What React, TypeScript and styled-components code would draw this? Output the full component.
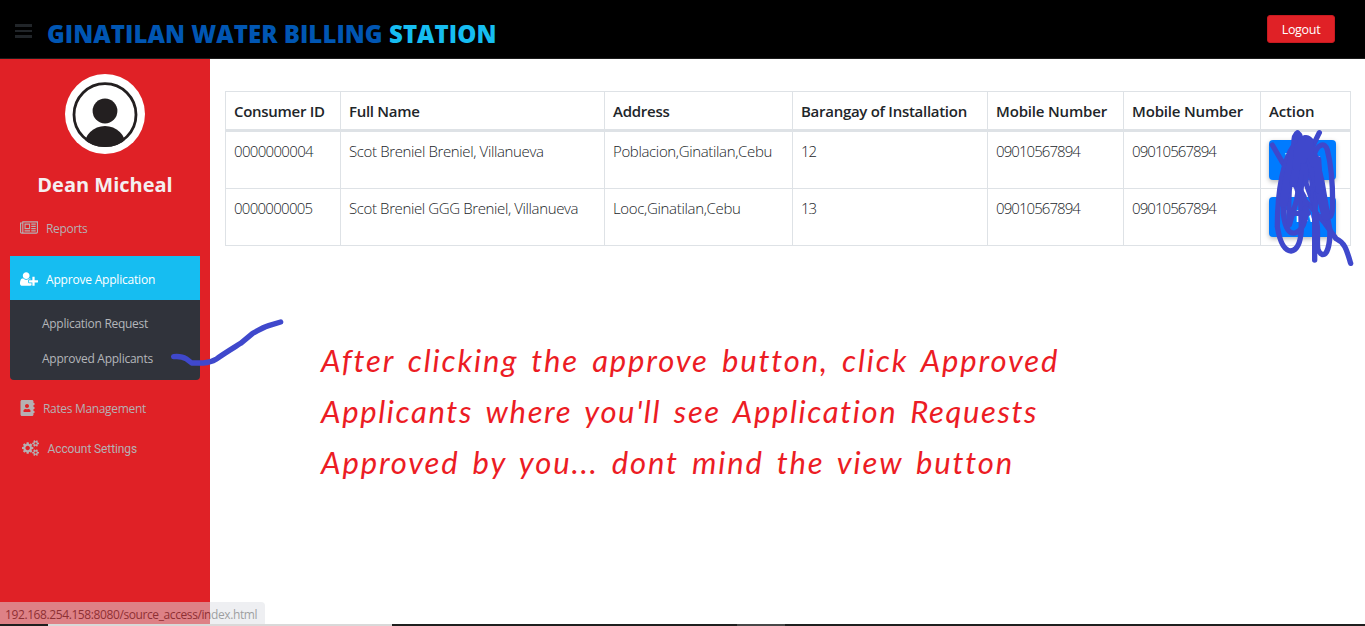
import React from 'react';
import styled, { createGlobalStyle } from 'styled-components';
import { FaAddressBook } from 'react-icons/fa';

const Global = createGlobalStyle`
  * { box-sizing: border-box; }
  body { margin: 0; background: #fff; overflow: hidden; font-family: "Open Sans", sans-serif; color: #212529; }
`;

const Page = styled.div`
  position: relative;
  display: flex;
  flex-direction: column;
  width: 1365px;
  height: 626px;
  overflow: hidden;
`;

const TopBar = styled.header`
  display: flex;
  align-items: center;
  flex: none;
  height: 59px;
  padding: 0 30px 0 15px;
  background: #000;
  border-bottom: 1px solid #1c1c1c;
`;

const MenuButton = styled.div`
  display: flex;
  flex-direction: column;
  gap: 3px;
  width: 17px;
  margin: 4px 16px 0 0;
`;

const MenuBar = styled.span`
  height: 2.6px;
  background: #212529;
`;

const Brand = styled.h1`
  flex: 1;
  margin: 10px 0 0 -1px;
  font-size: 24px;
  line-height: 32px;
  font-weight: 800;
  letter-spacing: 0.05px;
  color: #0056b3;
  white-space: nowrap;
`;

const BrandAccent = styled.span`
  color: #16bdf1;
`;

const LogoutButton = styled.button`
  width: 68px;
  height: 28px;
  padding: 2px 0 0;
  border: 1px solid #c81a20;
  border-radius: 3px;
  background: #e02126;
  color: #fff;
  font: 400 12.5px/24px "Open Sans", sans-serif;
  letter-spacing: -0.3px;
`;

const Body = styled.div`
  display: flex;
  flex: none;
  height: 565px;
`;

const Sidebar = styled.aside`
  display: flex;
  flex-direction: column;
  align-items: center;
  flex: none;
  width: 210px;
  padding: 15px 10px 0;
  background: #e02126;
`;

const Avatar = styled.svg`
  flex: none;
  width: 80px;
  height: 80px;
`;

const UserName = styled.div`
  margin: 19px 0 11px;
  font-size: 20px;
  line-height: 24px;
  font-weight: 700;
  color: #f4eff0;
  white-space: nowrap;
`;

const Nav = styled.nav`
  width: 100%;
`;

const NavItem = styled.div<{ $active?: boolean; $gap: number; $indent?: number }>`
  display: flex;
  align-items: center;
  gap: ${(p) => p.$gap}px;
  height: ${(p) => (p.$active ? 44 : 40)}px;
  margin-top: ${(p) => (p.$active ? 8 : 0)}px;
  padding: ${(p) => (p.$active ? 4 : 2)}px 0 0 ${(p) => p.$indent ?? 10}px;
  background: ${(p) => (p.$active ? '#16bdf1' : 'transparent')};
  color: ${(p) => (p.$active ? '#fff' : '#b5b0b3')};
`;

const NavIcon = styled.svg<{ $w?: number; $lift?: number }>`
  flex: none;
  width: ${(p) => p.$w ?? 18}px;
  height: 16px;
  margin-bottom: ${(p) => p.$lift ?? 0}px;
  fill: currentColor;
`;

const BookIcon = styled(FaAddressBook)`
  flex: none;
  width: 15px;
  height: 16px;
  margin-bottom: 3px;
`;

const NavLabel = styled.span<{ $track: number; $roboto?: boolean }>`
  font-family: ${(p) => (p.$roboto ? 'Roboto' : '"Open Sans"')}, sans-serif;
  font-size: 12px;
  line-height: 16px;
  letter-spacing: ${(p) => p.$track}px;
  white-space: nowrap;
`;

const SubMenu = styled.div`
  height: 80px;
  margin-bottom: 8px;
  padding: 6px 0 0 32px;
  border-radius: 0 0 4px 4px;
  background: #30333b;
  color: #b4b6ba;
`;

const SubItem = styled.div`
  display: flex;
  align-items: center;
  height: 35px;
`;

const Main = styled.main`
  flex: 1;
  padding: 32px 0 0 15px;
`;

const Table = styled.table`
  width: 1126px;
  table-layout: fixed;
  border-collapse: separate;
  border-spacing: 0;
  border-right: 1px solid #dee2e6;
`;

const Th = styled.th<{ $track: number }>`
  height: 41px;
  padding: 0 0 0 8px;
  border: solid #dee2e6;
  border-width: 1px 0 3px 1px;
  text-align: left;
  font-size: 15px;
  line-height: 22px;
  font-weight: 550;
  letter-spacing: ${(p) => p.$track}px;
  white-space: nowrap;
`;

const Td = styled.td<{ $track?: number }>`
  height: 57px;
  padding: 8px 0 0 8px;
  border: solid #dee2e6;
  border-width: 0 0 1px 1px;
  vertical-align: top;
  font-size: 15px;
  line-height: 23px;
  font-weight: 300;
  letter-spacing: ${(p) => p.$track ?? 0}px;
  white-space: nowrap;
`;

const ViewButton = styled.button`
  display: block;
  width: 67px;
  height: 40px;
  padding: 0;
  border: 0;
  border-radius: 4px;
  background: #007bff;
  box-shadow: 0 2px 5px rgba(0, 0, 0, 0.28);
  color: #fff;
  font: 500 16px/40px Roboto, sans-serif;
`;

const Note = styled.div`
  margin: 89px 0 0 96px;
  color: #ec1c24;
  font-family: Lato, sans-serif;
  font-size: 31px;
  font-style: italic;
  line-height: 51px;
  word-spacing: 4px;
  white-space: nowrap;
`;

const NoteLine = styled.div<{ $track: number }>`
  letter-spacing: ${(p) => p.$track}px;
`;

const Taskbar = styled.footer`
  display: flex;
  flex: none;
  height: 2px;
  background: #1f1f1f;
`;

const TaskSegment = styled.span<{ $w: number; $bg: string }>`
  width: ${(p) => p.$w}px;
  background: ${(p) => p.$bg};
`;

const LinkStatus = styled.div`
  position: absolute;
  left: 0;
  bottom: 2px;
  width: 265px;
  height: 22px;
  padding: 3px 0 0 5px;
  border-radius: 0 4px 0 0;
  background: #dee1e6;
  color: #3c4043;
  opacity: 0.5;
  font-size: 12px;
  line-height: 19px;
  letter-spacing: -0.4px;
  white-space: nowrap;
`;

const Ink = styled.svg<{ $x: number; $y: number }>`
  position: absolute;
  left: ${(p) => p.$x}px;
  top: ${(p) => p.$y}px;
  fill: none;
  stroke: #3f48cc;
  stroke-linecap: round;
  stroke-linejoin: round;
`;

const headers: [string, number, number][] = [
  ['Consumer ID', 115, -0.3],
  ['Full Name', 264, -0.3],
  ['Address', 188, -0.25],
  ['Barangay of Installation', 195, -0.28],
  ['Mobile Number', 136, -0.17],
  ['Mobile Number', 137, -0.17],
  ['Action', 90, -0.15],
];

const rows: [string, number][][] = [
  [['0000000004', -0.67], ['Scot Breniel Breniel, Villanueva', -0.37], ['Poblacion,Ginatilan,Cebu', -0.35], ['12', -1.1], ['09010567894', -0.93], ['09010567894', -0.93]],
  [['0000000005', -0.72], ['Scot Breniel GGG Breniel, Villanueva', -0.38], ['Looc,Ginatilan,Cebu', -0.33], ['13', -1.1], ['09010567894', -0.93], ['09010567894', -0.93]],
];

const newspaper =
  'M1024 512h-384v384h384v-384zm128 640v128h-640v-128h640zm0-768v640h-640v-640h640zm640 768v128h-512v-128h512zm0-256v128h-512v-128h512zm0-256v128h-512v-128h512zm0-256v128h-512v-128h512zm-1536 960v-960h-128v960q0 26 19 45t45 19 45-19 19-45zm1664 0v-1088h-1536v1088q0 33-11 64h1483q26 0 45-19t19-45zm128-1216v1216q0 80-56 136t-136 56h-1664q-80 0-136-56t-56-136v-1088h256v-128h1792z';
const userPlus =
  'M704 896q-159 0-271.5-112.5t-112.5-271.5 112.5-271.5 271.5-112.5 271.5 112.5 112.5 271.5-112.5 271.5-271.5 112.5zm960 128h352q13 0 22.5 9.5t9.5 22.5v192q0 13-9.5 22.5t-22.5 9.5h-352v352q0 13-9.5 22.5t-22.5 9.5h-192q-13 0-22.5-9.5t-9.5-22.5v-352h-352q-13 0-22.5-9.5t-9.5-22.5v-192q0-13 9.5-22.5t22.5-9.5h352v-352q0-13 9.5-22.5t22.5-9.5h192q13 0 22.5 9.5t9.5 22.5v352zm-736 224q0 52 38 90t90 38h256v238q-68 50-171 50h-874q-121 0-194-69t-73-190q0-53 3.5-103.5t14-109 26.5-108.5 43-97.5 62-81 85.5-53.5 111.5-20q19 0 39 17 79 61 154.5 91.5t164.5 30.5 164.5-30.5 154.5-91.5q20-17 39-17 132 0 217 96h-223q-52 0-90 38t-38 90v192z';
const gearBig =
  'M896 896q0-106-75-181t-181-75-181 75-75 181 75 181 181 75 181-75 75-181zm384-91v185q0 10-7 19.5t-16 10.5l-155 24q-11 35-32 76 34 48 90 115 7 11 7 20 0 12-7 19-23 30-82.5 89.5t-78.5 59.5q-11 0-21-7l-115-90q-37 19-77 31-11 108-23 155-7 24-30 24h-186q-11 0-20-7.5t-10-17.5l-23-153q-34-10-75-31l-118 89q-7 7-20 7-11 0-21-8-144-133-144-160 0-9 7-19 10-14 41-53t47-61q-23-44-35-82l-152-24q-10-1-17-9.5t-7-19.5v-185q0-10 7-19.5t16-10.5l155-24q11-35 32-76-34-48-90-115-7-11-7-20 0-12 7-20 22-30 82-89t79-59q11 0 21 7l115 90q34-18 77-32 11-108 23-154 7-24 30-24h186q11 0 20 7.5t10 17.5l23 153q34 10 75 31l118-89q8-7 20-7 11 0 21 8 144 133 144 160 0 9-7 19-12 16-42 54t-45 60q23 48 34 82l152 23q10 2 17 10.5t7 19.5z';
const gearSmall =
  'M1664 1408q0-52-38-90t-90-38-90 38-38 90q0 53 37.5 90.5t90.5 37.5 90.5-37.5 37.5-90.5zM1920 1338v140q0 16-149 31-12 27-30 52 51 113 51 138 0 4-4 7-122 71-124 71-8 0-46-47t-52-68q-20 2-30 2t-30-2q-14 21-52 68t-46 47q-2 0-124-71-4-3-4-7 0-25 51-138-18-25-30-52-149-15-149-31v-140q0-16 149-31 13-29 30-52-51-113-51-138 0-4 4-7 4-2 35-20t59-34 30-16q8 0 46 46.5t52 67.5q20-2 30-2t30 2q51-71 92-112l6-2q4 0 124 70 4 3 4 7 0 25-51 138 17 23 30 52 149 15 149 31z';

export default function App() {
  return (
    <Page>
      <Global />
      <TopBar>
        <MenuButton>
          <MenuBar />
          <MenuBar />
          <MenuBar />
        </MenuButton>
        <Brand>
          GINATILAN WATER BILLING <BrandAccent>STATION</BrandAccent>
        </Brand>
        <LogoutButton>Logout</LogoutButton>
      </TopBar>

      <Body>
        <Sidebar>
          <Avatar viewBox="0 0 80 80">
            <defs>
              <clipPath id="ring">
                <circle cx="40" cy="40.7" r="32.4" />
              </clipPath>
            </defs>
            <circle cx="40" cy="40" r="40" fill="#fff" />
            <circle cx="40" cy="40.7" r="31" fill="none" stroke="#231f20" strokeWidth="2.8" />
            <circle cx="40" cy="37" r="12.4" fill="#231f20" />
            <ellipse cx="40" cy="72.5" rx="21" ry="20.5" fill="#231f20" clipPath="url(#ring)" />
          </Avatar>
          <UserName>Dean Micheal</UserName>
          <Nav>
            <NavItem $gap={8}>
              <NavIcon viewBox="0 0 2048 1792" $lift={3}>
                <path d={newspaper} />
              </NavIcon>
              <NavLabel $track={-0.3}>Reports</NavLabel>
            </NavItem>
            <NavItem $active $gap={8}>
              <NavIcon viewBox="0 0 2048 1792" $lift={2}>
                <path d={userPlus} />
              </NavIcon>
              <NavLabel $track={-0.2}>Approve Application</NavLabel>
            </NavItem>
            <SubMenu>
              <SubItem>
                <NavLabel $track={-0.28}>Application Request</NavLabel>
              </SubItem>
              <SubItem>
                <NavLabel $track={-0.25}>Approved Applicants</NavLabel>
              </SubItem>
            </SubMenu>
            <NavItem $gap={8}>
              <BookIcon />
              <NavLabel $track={-0.33}>Rates Management</NavLabel>
            </NavItem>
            <NavItem $gap={8.5} $indent={12}>
              <NavIcon viewBox="0 0 1920 1792" $w={17} $lift={3}>
                <path d={gearBig} />
                <path d={gearSmall} />
                <path d={gearSmall} transform="translate(0 -1024)" />
              </NavIcon>
              <NavLabel $track={-0.1} $roboto>
                Account Settings
              </NavLabel>
            </NavItem>
          </Nav>
        </Sidebar>

        <Main>
          <Table>
            <colgroup>
              {headers.map(([, w], i) => (
                <col key={i} width={w} />
              ))}
            </colgroup>
            <thead>
              <tr>
                {headers.map(([label, , track], i) => (
                  <Th key={i} $track={track}>
                    {label}
                  </Th>
                ))}
              </tr>
            </thead>
            <tbody>
              {rows.map((cells, r) => (
                <tr key={r}>
                  {cells.map(([value, track], i) => (
                    <Td key={i} $track={track}>
                      {value}
                    </Td>
                  ))}
                  <Td>
                    <ViewButton>View</ViewButton>
                  </Td>
                </tr>
              ))}
            </tbody>
          </Table>
          <Note>
            <NoteLine $track={1.87}>After clicking the approve button, click Approved</NoteLine>
            <NoteLine $track={1.62}>Applicants where you'll see Application Requests</NoteLine>
            <NoteLine $track={1.85}>Approved by you... dont mind the view button</NoteLine>
          </Note>
        </Main>
      </Body>

      <Taskbar>
        <TaskSegment $w={48} $bg="#1f1f1f" />
        <TaskSegment $w={344} $bg="#d9d9d9" />
        <TaskSegment $w={345} $bg="#1f1f1f" />
        <TaskSegment $w={48} $bg="#484848" />
      </Taskbar>

      <LinkStatus>192.168.254.158:8080/source_access/index.html</LinkStatus>

      <Ink $x={160} $y={310} width="130" height="60" viewBox="480 330 390 180" strokeWidth="16">
        <path d="M521 470 Q545 468 558 476 L575 489 H610 Q632 488 648 478 C670 462 690 450 722 430 L758 400 Q790 382 806 377 L842 366" />
      </Ink>
      <Ink $x={1230} $y={80} width="135" height="200" viewBox="0 0 405 600" strokeWidth="16">
        <path d="M127 195 L155 243 L193 300 L205 340 L240 378 L285 430 L318 476 C345 488 350 510 362 550" />
        <path d="M203 158 Q190 165 192 195 C160 240 142 330 142 440 C150 490 165 512 183 513 C205 510 212 480 214 450 L212 340 L222 240" />
        <path d="M210 190 C180 230 160 330 160 400 C165 450 180 462 195 459 C225 450 236 400 222 350 L190 290 L180 260" />
        <path d="M205 180 C180 260 172 340 178 435 L200 360 L215 270 L215 190 Q228 160 245 185 L232 230 L228 310 L250 370" />
        <path d="M268 158 L240 215 L262 290 L280 350 L300 450 C300 500 290 524 278 524 C255 515 265 490 262 440 L250 350 L238 220" />
        <path d="M254 540 V400 L262 310 L245 220 M190 400 H235 L225 385" />
        <path d="M250 230 C262 190 285 185 292 210 C305 260 308 310 308 370 C308 410 298 420 292 400 L275 300 L255 225 L240 180 L225 175 L200 215 L185 240" />
        <path d="M205 168 L190 220 L172 300 L160 370 M225 178 L238 230 L258 300 L275 360 L288 410" strokeWidth="26" />
        <path d="M205 200 L198 270 L190 310 M238 185 V220 L252 250 M215 185 L218 240 M262 240 L268 330" strokeWidth="24" />
      </Ink>
    </Page>
  );
}
